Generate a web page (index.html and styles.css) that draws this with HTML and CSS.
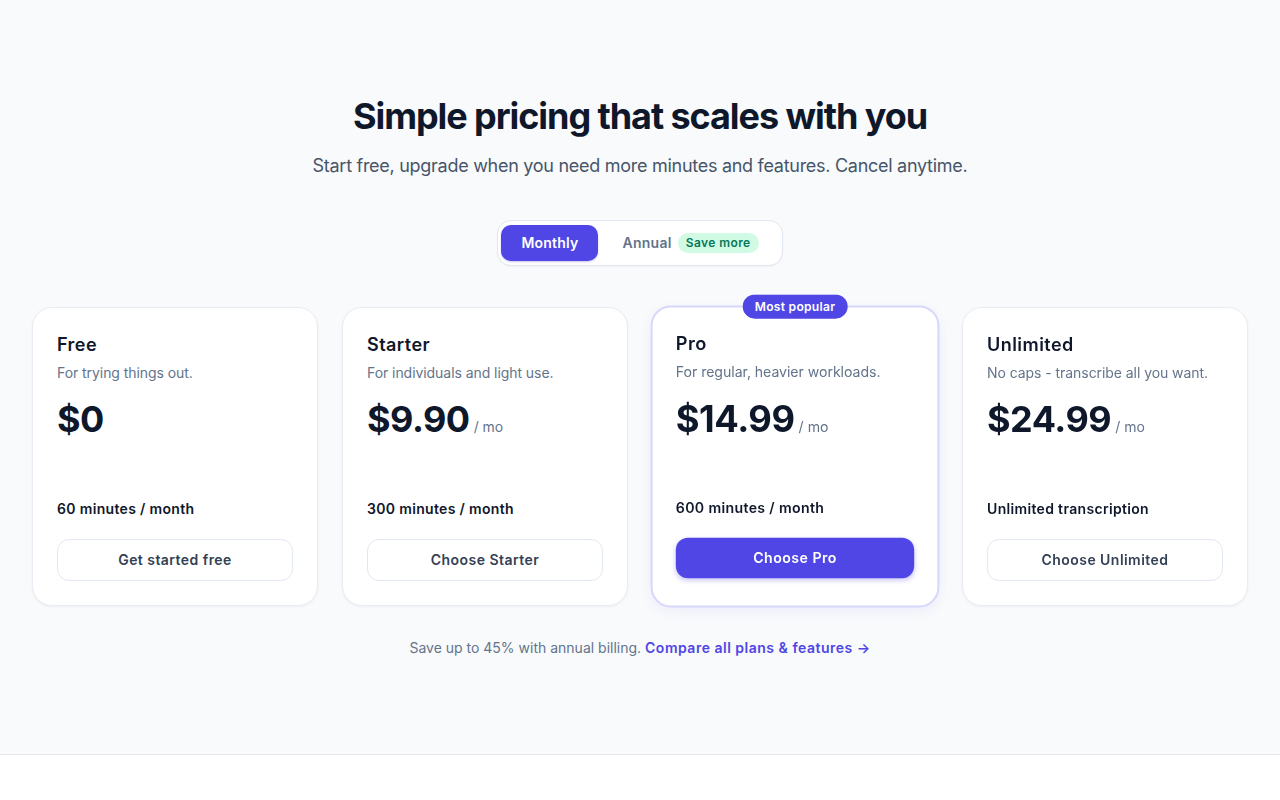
FILE: index.html
```html
<!DOCTYPE html>
<html lang="en">
<head>
<meta charset="utf-8">
<title>Pricing</title>
<link rel="stylesheet" href="styles.css">
</head>
<body>
<section class="pricing">
  <h1 class="title">Simple pricing that scales with you</h1>
  <p class="subtitle">Start free, upgrade when you need more minutes and features. Cancel anytime.</p>

  <div class="toggle-wrap">
    <div class="toggle">
      <button class="toggle-btn active">Monthly</button>
      <button class="toggle-btn">Annual <span class="save">Save more</span></button>
    </div>
  </div>

  <div class="grid">
    <div class="card">
      <h3 class="plan">Free</h3>
      <p class="desc">For trying things out.</p>
      <div class="price"><span class="amount">$0</span></div>
      <p class="feature">60 minutes / month</p>
      <button class="btn">Get started free</button>
    </div>
    <div class="card">
      <h3 class="plan">Starter</h3>
      <p class="desc">For individuals and light use.</p>
      <div class="price"><span class="amount">$9.90</span><span class="per">/ mo</span></div>
      <p class="feature">300 minutes / month</p>
      <button class="btn">Choose Starter</button>
    </div>
    <div class="card featured">
      <span class="badge">Most popular</span>
      <h3 class="plan">Pro</h3>
      <p class="desc">For regular, heavier workloads.</p>
      <div class="price"><span class="amount">$14.99</span><span class="per">/ mo</span></div>
      <p class="feature">600 minutes / month</p>
      <button class="btn primary">Choose Pro</button>
    </div>
    <div class="card">
      <h3 class="plan">Unlimited</h3>
      <p class="desc">No caps - transcribe all you want.</p>
      <div class="price"><span class="amount">$24.99</span><span class="per">/ mo</span></div>
      <p class="feature">Unlimited transcription</p>
      <button class="btn">Choose Unlimited</button>
    </div>
  </div>

  <p class="note">Save up to 45% with annual billing. <a href="#" class="link">Compare all plans &amp; features →</a></p>
</section>
<footer class="footer"></footer>
</body>
</html>
```

FILE: styles.css
```css
* { box-sizing: border-box; }
html, body { margin: 0; padding: 0; }
body {
  font-family: Inter, "Noto Sans", sans-serif;
  background: #ffffff;
  color: #0f172a;
}
.pricing {
  background: #f8fafc;
  padding: 96px 32px 96px;
  border-bottom: 1px solid #e5e7eb;
  text-align: center;
}
.title {
  margin: 0;
  font-size: 36px;
  line-height: 40px;
  font-weight: 700;
  letter-spacing: -1.07px;
  color: #0f172a;
}
.subtitle {
  margin: 16px 0 0;
  font-size: 18px;
  line-height: 28px;
  letter-spacing: -0.28px;
  color: #475569;
}
.toggle-wrap {
  margin-top: 40px;
  display: flex;
  justify-content: center;
}
.toggle {
  display: inline-flex;
  gap: 4px;
  padding: 4px 3px;
  background: #ffffff;
  border: 1px solid #e2e8f0;
  border-radius: 14px;
  box-shadow: 0 1px 2px rgba(15, 23, 42, 0.04);
}
.toggle-btn {
  font-family: inherit;
  font-size: 14px;
  font-weight: 600;
  line-height: 20px;
  letter-spacing: 0.3px;
  height: 36px;
  padding: 0 20px;
  border: 0;
  border-radius: 10px;
  background: transparent;
  color: #64748b;
  display: inline-flex;
  align-items: center;
  gap: 6px;
}
.toggle-btn.active {
  letter-spacing: 0.2px;
  background: #4f46e5;
  color: #ffffff;
  box-shadow: 0 1px 2px rgba(79, 70, 229, 0.3);
}
.save {
  font-size: 12px;
  line-height: 16px;
  font-weight: 600;
  letter-spacing: 0.4px;
  background: #d1fae5;
  color: #047857;
  padding: 2px 8px;
  border-radius: 999px;
}
.grid {
  margin-top: 41px;
  display: grid;
  grid-template-columns: repeat(4, 1fr);
  gap: 24px;
  text-align: left;
}
.card {
  position: relative;
  background: #ffffff;
  border: 1px solid #e9edf3;
  border-radius: 20px;
  padding: 23px 24px 24px;
  display: flex;
  flex-direction: column;
  box-shadow: 0 1px 3px rgba(15, 23, 42, 0.05);
}
.card.featured {
  border: 2px solid #d6d7fa;
  padding: 22px 23px 23px;
  transform: scale(1.01);
  box-shadow: 0 4px 12px rgba(79, 70, 229, 0.06);
}
.badge {
  position: absolute;
  top: -13px;
  left: 50%;
  transform: translateX(-50%);
  background: #4f46e5;
  color: #ffffff;
  font-size: 12px;
  font-weight: 600;
  line-height: 16px;
  letter-spacing: 0.25px;
  padding: 4px 12px;
  border-radius: 999px;
  white-space: nowrap;
}
.plan {
  margin: 0;
  font-size: 18px;
  line-height: 28px;
  font-weight: 600;
  letter-spacing: 0.45px;
  color: #0f172a;
}
.desc {
  margin: 4px 0 0;
  font-size: 14px;
  line-height: 20px;
  letter-spacing: -0.06px;
  color: #64748b;
}
.price {
  margin-top: 16px;
  display: flex;
  align-items: baseline;
  gap: 4px;
}
.amount {
  font-size: 36px;
  line-height: 40px;
  font-weight: 700;
  letter-spacing: -0.5px;
  color: #0f172a;
}
.per {
  font-size: 14px;
  color: #64748b;
}
.feature {
  margin: 60px 0 0;
  font-size: 14px;
  line-height: 20px;
  font-weight: 600;
  letter-spacing: 0.33px;
  color: #0f172a;
}
.featured .feature { margin-top: 58px; }
.btn {
  margin-top: 20px;
  font-family: inherit;
  font-size: 14px;
  font-weight: 600;
  line-height: 20px;
  letter-spacing: 0.45px;
  height: 42px;
  border: 1px solid #e2e8f0;
  border-radius: 12px;
  background: #ffffff;
  color: #334155;
  width: 100%;
}
.btn.primary {
  height: 40px;
  border: 0;
  background: #4f46e5;
  color: #ffffff;
  box-shadow: 0 2px 4px rgba(79, 70, 229, 0.25);
}
.note {
  margin: 32px 0 0;
  font-size: 14px;
  line-height: 20px;
  color: #64748b;
}
.link {
  color: #4f46e5;
  font-weight: 600;
  letter-spacing: 0.5px;
  text-decoration: none;
}
.footer {
  height: 60px;
  background: #ffffff;
}
```
